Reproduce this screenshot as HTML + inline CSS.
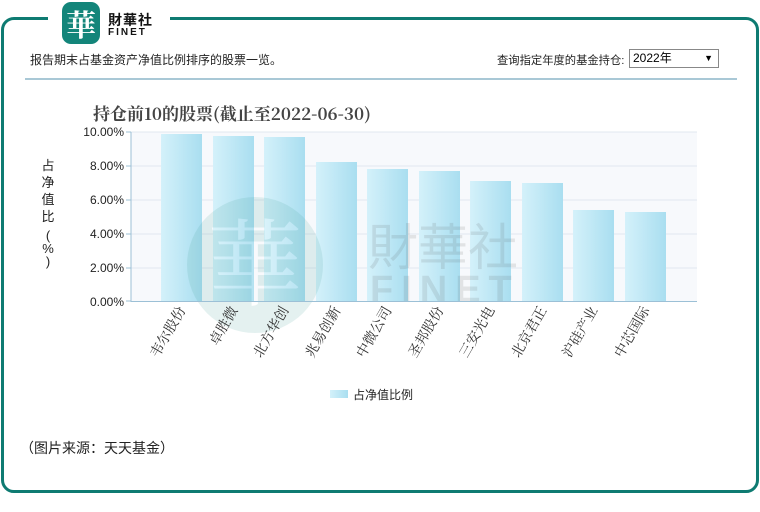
<!DOCTYPE html>
<html><head><meta charset="utf-8"><style>
body{margin:0;width:760px;height:512px;background:#fff;position:relative;overflow:hidden;font-family:"Liberation Sans","Noto Sans CJK SC",sans-serif;}
.frame{position:absolute;left:1px;top:17px;width:752px;height:470px;border:3px solid #0e7b72;border-radius:13px;}
.gap{position:absolute;left:48px;top:10px;width:122px;height:14px;background:#fff;}
.logo{position:absolute;left:62px;top:2px;width:38px;height:42px;background:#13857a;border-radius:9px;color:#fff;font:bold 30px "Noto Serif CJK SC",serif;text-align:center;line-height:42px;}
.lt1{position:absolute;left:108px;top:10px;font:bold 14px "Noto Sans CJK SC",sans-serif;color:#111;letter-spacing:1px;}
.lt2{position:absolute;left:108px;top:27px;font:bold 10px "Liberation Sans",sans-serif;color:#111;letter-spacing:2px;}
.t{position:absolute;font-size:12px;color:#222;white-space:nowrap;}
.sep{position:absolute;left:25px;top:78px;width:712px;height:2px;background:#a9c8d6;}
.sel{position:absolute;left:629px;top:49px;width:90px;font-size:12px;line-height:16px;padding-left:3px;box-sizing:border-box;height:19px;border:1px solid #888;}
</style></head><body>
<div class="frame"></div>
<div class="gap"></div>
<div class="logo">華</div>
<div class="lt1">財華社</div>
<div class="lt2">FINET</div>
<div class="t" style="left:30px;top:51px">报告期末占基金资产净值比例排序的股票一览。</div>
<div class="t" style="left:497px;top:52px;font-size:11.3px">查询指定年度的基金持仓:</div>
<div class="sel">2022年<span style="position:absolute;right:5px;top:0;font-size:9px">▼</span></div>
<div class="sep"></div>
<svg style="position:absolute;left:0;top:0" width="760" height="512">
<defs><linearGradient id="g" x1="0" x2="1"><stop offset="0" stop-color="#d4f1fa"/><stop offset="1" stop-color="#a9def0"/></linearGradient></defs>
<text x="93" y="120" font-family="Noto Serif CJK SC,serif" font-size="17" fill="#444" font-weight="bold">持仓前10的股票(截止至2022-06-30)</text>
<rect x="131" y="132" width="566" height="169" fill="#f7f9fc"/>
<g stroke="#e1e8ef"><line x1="131" y1="132" x2="697" y2="132"/><line x1="131" y1="166" x2="697" y2="166"/><line x1="131" y1="200" x2="697" y2="200"/><line x1="131" y1="234" x2="697" y2="234"/><line x1="131" y1="268" x2="697" y2="268"/></g>
<g font-size="12" fill="#222" text-anchor="end" font-family="Liberation Sans,sans-serif">
<text x="124" y="136">10.00%</text><text x="124" y="170">8.00%</text><text x="124" y="204">6.00%</text><text x="124" y="238">4.00%</text><text x="124" y="272">2.00%</text><text x="124" y="306">0.00%</text></g>
<g fill="url(#g)">
<rect x="161" y="134" width="41" height="167"/><rect x="213" y="136" width="41" height="165"/><rect x="264" y="137" width="41" height="164"/><rect x="316" y="162" width="41" height="139"/><rect x="367" y="169" width="41" height="132"/><rect x="419" y="171" width="41" height="130"/><rect x="470" y="181" width="41" height="120"/><rect x="522" y="183" width="41" height="118"/><rect x="573" y="210" width="41" height="91"/><rect x="625" y="212" width="41" height="89"/></g>
<g opacity="0.13"><circle cx="255" cy="265" r="68" fill="#3a9a90"/><text x="255" y="298" text-anchor="middle" font-size="95" fill="#fff" font-family="Noto Serif CJK SC,serif">華</text>
<text x="368" y="265" font-size="50" fill="#555" font-family="Noto Sans CJK SC,sans-serif">財華社</text>
<text x="370" y="302" font-size="38" fill="#555" font-weight="bold" letter-spacing="8">FINET</text></g>
<g stroke="#9cc0d6"><line x1="131" y1="132" x2="131" y2="302"/><line x1="131" y1="301.5" x2="697" y2="301.5"/>
<line x1="126" y1="132" x2="131" y2="132"/><line x1="126" y1="166" x2="131" y2="166"/><line x1="126" y1="200" x2="131" y2="200"/><line x1="126" y1="234" x2="131" y2="234"/><line x1="126" y1="268" x2="131" y2="268"/><line x1="126" y1="301" x2="131" y2="301"/></g>
<g font-size="14" fill="#333" font-family="Noto Serif CJK SC,serif" text-anchor="end">
<text transform="translate(186,310) rotate(-60)">韦尔股份</text>
<text transform="translate(238,310) rotate(-60)">卓胜微</text>
<text transform="translate(289,310) rotate(-60)">北方华创</text>
<text transform="translate(341,310) rotate(-60)">兆易创新</text>
<text transform="translate(392,310) rotate(-60)">中微公司</text>
<text transform="translate(444,310) rotate(-60)">圣邦股份</text>
<text transform="translate(495,310) rotate(-60)">三安光电</text>
<text transform="translate(547,310) rotate(-60)">北京君正</text>
<text transform="translate(598,310) rotate(-60)">沪硅产业</text>
<text transform="translate(650,310) rotate(-60)">中芯国际</text></g>
<g font-size="13" fill="#222" text-anchor="middle"><text x="48" y="170">占</text><text x="48" y="187">净</text><text x="48" y="204">值</text><text x="48" y="221">比</text><text x="48" y="240">(</text><text x="48" y="253">%</text><text x="48" y="266">)</text></g>
<rect x="330" y="390" width="18" height="8" fill="url(#g)"/>
<text x="353" y="399" font-size="12" fill="#222">占净值比例</text>
</svg>
<div class="t" style="left:20px;top:438px;font-size:14px;font-family:'Noto Sans CJK SC',sans-serif">（图片来源：天天基金）</div>
</body></html>
